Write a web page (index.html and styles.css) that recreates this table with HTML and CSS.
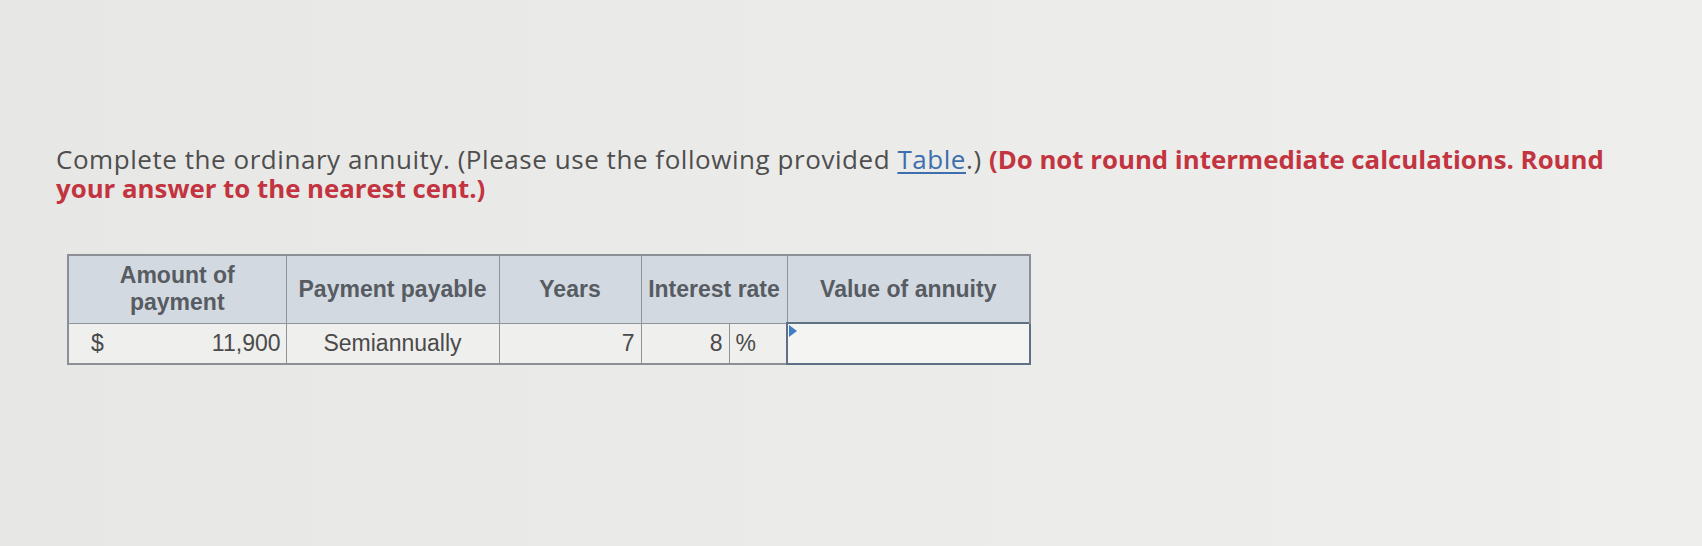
FILE: index.html
```html
<!DOCTYPE html>
<html>
<head>
<meta charset="utf-8">
<link rel="stylesheet" href="styles.css">
</head>
<body>
<div class="page">
  <p class="question">Complete the ordinary annuity. (Please use the following provided <a class="link" href="#">Table</a>.) <span class="warn">(Do not round intermediate calculations. Round<br>your answer to the nearest cent.)</span></p>
  <table class="annuity">
    <colgroup>
      <col class="c1"><col class="c2"><col class="c3"><col class="c4a"><col class="c4b"><col class="c5">
    </colgroup>
    <thead>
      <tr>
        <th>Amount of<br>payment</th>
        <th>Payment payable</th>
        <th>Years</th>
        <th colspan="2">Interest rate</th>
        <th class="last">Value of annuity</th>
      </tr>
    </thead>
    <tbody>
      <tr>
        <td class="money"><span class="cur">$</span><span>11,900</span></td>
        <td class="center">Semiannually</td>
        <td class="num">7</td>
        <td class="num">8</td>
        <td class="pct">%</td>
        <td class="answer"><span class="flag"></span></td>
      </tr>
    </tbody>
  </table>
</div>
</body>
</html>
```

FILE: styles.css
```css
html, body {
  margin: 0;
  padding: 0;
}
body {
  width: 1702px;
  height: 546px;
  overflow: hidden;
  background: linear-gradient(90deg, #e7e7e5 0%, #ebebe9 50%, #eeeeec 100%);
}
.page {
  padding: 145px 0 0 56px;
}
.question {
  margin: 0;
  width: 1640px;
  white-space: nowrap;
  font-family: "Open Sans", "Liberation Sans", sans-serif;
  font-size: 26px;
  letter-spacing: 0.55px;
  line-height: 29px;
  color: #4e4e4e;
}
.link {
  color: #3d6fae;
  text-decoration: underline;
  text-underline-offset: 3px;
}
.warn {
  color: #c2343f;
  font-weight: 700;
  font-size: 25.8px;
  letter-spacing: 0;
}
.annuity {
  margin: 51px 0 0 11px;
  border-collapse: collapse;
  font-family: "Liberation Sans", Arial, sans-serif;
  font-size: 23px;
  color: #4a4a4a;
  border: 2px solid #8c9096;
}
.c1 { width: 218px; }
.c2 { width: 213px; }
.c3 { width: 142px; }
.c4a { width: 88px; }
.c4b { width: 58px; }
.c5 { width: 243px; }
.annuity th {
  background: #d3d9e1;
  font-weight: 700;
  color: #575c62;
  height: 66px;
  padding: 0 4px;
  line-height: 27px;
  border: 1px solid #8f949a;
  text-align: center;
  vertical-align: middle;
}
.annuity th.last {
  border-right: 2px solid #8c9096;
}
.annuity td {
  height: 39px;
  padding: 0 6px;
  background: #efefed;
  border: 1px solid #8f949a;
  vertical-align: middle;
}
.money span:last-child {
  float: right;
}
.money {
  padding: 0 5px 0 22px !important;
}
.cur {
  float: left;
}
.center {
  text-align: center;
}
.num {
  text-align: right;
}
.pct {
  text-align: left;
}
.answer {
  position: relative;
  background: #f4f4f2 !important;
  border: 2px solid #5f6f85 !important;
}
.flag {
  position: absolute;
  left: 1px;
  top: 1px;
  width: 0;
  height: 0;
  border-top: 6px solid transparent;
  border-bottom: 6px solid transparent;
  border-left: 8px solid #3f7fc8;
}
```
